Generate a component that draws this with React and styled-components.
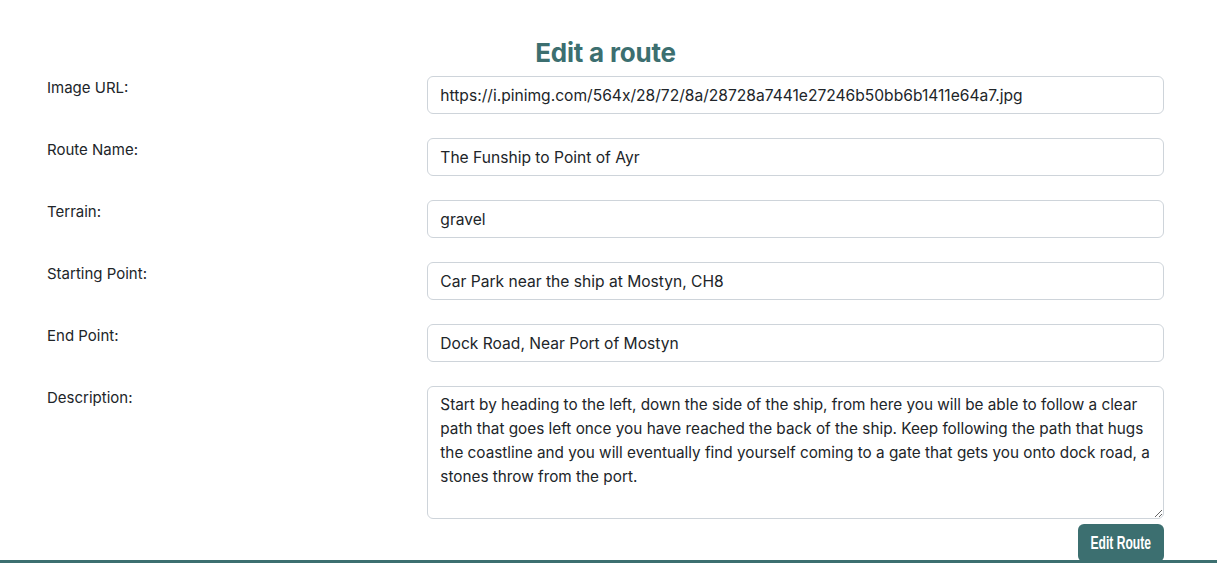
import React from "react";
import styled, { createGlobalStyle } from "styled-components";

const teal = "#3c6f70";

const GlobalStyle = createGlobalStyle`
  * { box-sizing: border-box; }
  body {
    margin: 0;
    font-family: Inter, "Noto Sans", "Liberation Sans", sans-serif;
    font-size: 16px;
    line-height: 1.5;
    color: #212529;
    background: #fff;
  }
`;

const Page = styled.div`
  min-height: 100vh;
  display: flex;
  flex-direction: column;
`;

const Main = styled.main`
  padding: 37px 41px 0 35px;
`;

const Title = styled.h2`
  margin: 0 0 8px;
  text-align: center;
  font-size: 26px;
  line-height: 1.2;
  font-weight: 700;
  letter-spacing: -0.2px;
  color: ${teal};
`;

const Form = styled.form`
  display: flex;
  flex-direction: column;
  gap: 24px;
`;

const Row = styled.div`
  display: grid;
  grid-template-columns: minmax(0, 1fr) minmax(0, 2fr);
`;

const Label = styled.label`
  padding: 0 12px;
  font-size: 15px;
  line-height: 24px;
`;

const Field = styled.div`
  padding: 0 12px;
`;

const Input = styled.input`
  display: block;
  width: 100%;
  height: 38px;
  padding: 6px 12px;
  font-family: inherit;
  font-size: 15.6px;
  line-height: 24px;
  color: #212529;
  border: 1px solid #ced4da;
  border-radius: 6px;
  background: #fff;
  outline: none;
`;

const TextArea = styled.textarea`
  display: block;
  width: 100%;
  height: 133px;
  padding: 6px 12px;
  font-family: inherit;
  font-size: 15.3px;
  line-height: 24px;
  color: #212529;
  border: 1px solid #ced4da;
  border-radius: 6px;
  resize: vertical;
  outline: none;
`;

const Actions = styled.div`
  display: flex;
  justify-content: flex-end;
  padding: 5px 12px 0;
  margin-top: -24px;
`;

const Button = styled.button`
  width: 86px;
  height: 38px;
  padding: 0;
  border: none;
  border-radius: 6px;
  background: ${teal};
  color: #fff;
  cursor: pointer;
  display: flex;
  align-items: center;
  justify-content: center;
`;

const ButtonText = styled.span`
  display: inline-block;
  font-family: "Liberation Sans", Arial, sans-serif;
  font-weight: 700;
  font-size: 17.5px;
  line-height: 24px;
  white-space: nowrap;
  transform: scaleX(0.69);
`;

const Footer = styled.footer`
  margin-top: -2px;
  height: 60px;
  background: ${teal};
`;

const fields = [
  {
    id: "image",
    label: "Image URL:",
    value: "https://i.pinimg.com/564x/28/72/8a/28728a7441e27246b50bb6b1411e64a7.jpg",
  },
  { id: "name", label: "Route Name:", value: "The Funship to Point of Ayr" },
  { id: "terrain", label: "Terrain:", value: "gravel" },
  { id: "start", label: "Starting Point:", value: "Car Park near the ship at Mostyn, CH8" },
  { id: "end", label: "End Point:", value: "Dock Road, Near Port of Mostyn" },
];

const description =
  "Start by heading to the left, down the side of the ship, from here you will be able to follow a clear path that goes left once you have reached the back of the ship. Keep following the path that hugs the coastline and you will eventually find yourself coming to a gate that gets you onto dock road, a stones throw from the port.";

const App = () => {
  return (
    <Page>
      <GlobalStyle />
      <Main>
        <Title>Edit a route</Title>
        <Form onSubmit={e => e.preventDefault()}>
          {fields.map(f => (
            <Row key={f.id}>
              <Label htmlFor={f.id}>{f.label}</Label>
              <Field>
                <Input id={f.id} defaultValue={f.value} />
              </Field>
            </Row>
          ))}
          <Row>
            <Label htmlFor="description">Description:</Label>
            <Field>
              <TextArea id="description" rows={5} defaultValue={description} />
            </Field>
          </Row>
          <Actions>
            <Button type="submit">
              <ButtonText>Edit Route</ButtonText>
            </Button>
          </Actions>
        </Form>
      </Main>
      <Footer />
    </Page>
  );
};

export default App;
